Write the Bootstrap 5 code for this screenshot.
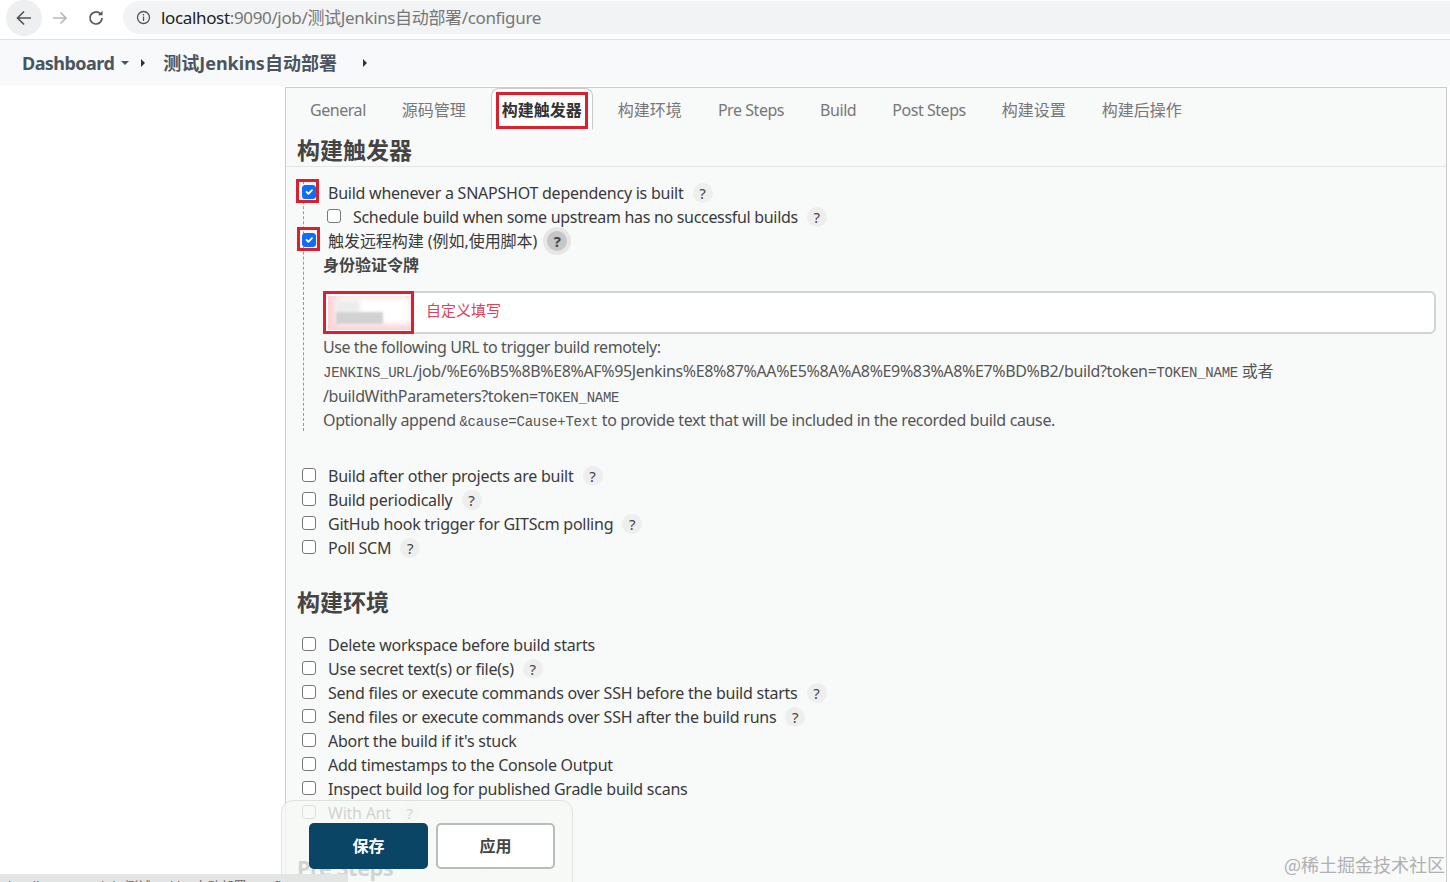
<!DOCTYPE html>
<html lang="zh-CN">
<head>
  <meta charset="UTF-8" />
  <meta name="viewport" content="width=device-width, initial-scale=1.0" />
  <title>测试Jenkins自动部署 Config</title>
  <link href="https://cdn.jsdelivr.net/npm/bootstrap@5.3.0/dist/css/bootstrap.min.css" rel="stylesheet" />
  <style>
    html, body { height: 882px; overflow: hidden; }
    body { font-family: "Noto Sans", "Noto Sans CJK SC", sans-serif; font-size: 16px; color: #333; background: #fff; position: relative; }

    .browser-bar { height: 40px; border-bottom: 1px solid #dfe1e3; padding: 0 0 4px 6px; }
    .nav-round { width: 36px; height: 36px; border-radius: 50%; flex: none; }
    .nav-round.hovered { background: #eeeff0; }
    .url-pill { height: 33px; margin-left: 9px; padding-left: 13px; background: #f1f3f4; border-radius: 17px 0 0 17px; color: #777; font-size: 17px; letter-spacing: -.35px; }
    .url-pill b { font-weight: 400; color: #222; }
    .url-pill svg { margin-right: 10px; }

    .crumb-bar { height: 46px; background: #f8f9fa; padding-left: 22px; font-weight: 700; font-size: 18px; color: #4a5560; }
    .crumb-tight { letter-spacing: -.55px; }
    .tri-down { border: 4px solid transparent; border-top: 4px solid #4a5560; border-bottom: 0; width: 0; height: 0; margin-left: 7px; }
    .tri-right { border: 4px solid transparent; border-left: 4px solid #333; border-right: 0; width: 0; height: 0; }
    .tri-first { margin-left: 12px; }
    .crumb-job { margin-left: 18px; }
    .tri-last { margin-left: 26px; }

    .main-panel { margin: 1px 3px 0 285px; height: 800px; background: #f8f9f9; border-left: 1px solid #ccc; border-right: 1px solid #ccc; border-top: 1px solid #ccc; overflow: hidden; }

    .tab-strip { height: 42px; padding-left: 6px; background: #f8f9f9; border-bottom: 0; }
    .tab-strip .nav-link { height: 42px; margin: 0 7px; padding: 1px 10px 0; color: #777; border: 1px solid transparent; background: none; font-size: 16px; display: flex; align-items: center; }
    .tab-strip .nav-link.latin-tab { letter-spacing: -.45px; }
    .tab-strip .nav-link.active { position: relative; background: #fff; color: #333; font-weight: 700; border-color: #ccc #ccc transparent; border-radius: 8px 8px 0 0; }
    .tab-redbox { position: absolute; left: 4px; top: 3px; width: 92px; height: 37px; border: 3px solid #d9202c; }

    .sect-title { margin: 0 11px; font-size: 23px; font-weight: 700; line-height: 36px; color: #444; }
    .sect-first { padding-top: 2px; }
    .sect-rule { border-bottom: 1px solid #e4e4e4; height: 37px; }
    .sect-gap { margin-top: 24px; }
    .sect-latin { font-size: 22px; letter-spacing: -.6px; }

    .opt-row { height: 24px; display: flex; align-items: center; padding-left: 16px; white-space: nowrap; color: #3a3a3a; letter-spacing: -.24px; position: relative; }
    .opt-row.cjk-row { letter-spacing: -.05px; }
    .opt-row .form-check-input { width: 14px; height: 14px; margin: -3px 12px 0 0; flex: none; border: 1px solid #777; border-radius: 3px; }
    .opt-row .form-check-input:checked { background-color: #0d6efd; border-color: #0d6efd; }
    .help-dot { width: 20px; height: 20px; margin-left: 9px; border-radius: 50%; background: #eeeeee; color: #444; font-size: 15px; letter-spacing: 0; display: flex; align-items: center; justify-content: center; flex: none; }
    .help-dot.hovered { margin-left: 10px; background: #c6c6c6; box-shadow: 0 0 0 4px #e6e6e6; font-weight: 700; }
    .red-frame { position: absolute; border: 3px solid #d9202c; pointer-events: none; }
    .frame-one { left: 10px; top: -2px; width: 23px; height: 24px; }
    .frame-two { left: 11px; top: -2px; width: 23px; height: 24px; }

    .trigger-block { margin: 14px 0 0 17px; border-left: 1px dashed #999; position: relative; height: 250px; }
    .trigger-block .opt-row { margin-left: -18px; }
    .trigger-block .opt-row.nested { padding-left: 41px; letter-spacing: -.31px; }

    .field-name { height: 24px; line-height: 24px; margin-left: 19px; font-weight: 700; color: #444; }
    .token-box { margin: 14px 10px 0 19px; height: 43px; border-radius: 6px; border: 2px solid #d0d3d3; background: #fff; padding: 0 0 4px 101px; color: #e0405a; font-size: 15px; position: relative; }
    .token-mask { position: absolute; left: 3px; top: 3px; width: 83px; height: 34px; background: #fff; box-shadow: inset 0 -5px 6px #fbd3d8, inset 8px 0 8px #fbd3d8; }
    .token-mask::before { content: ""; position: absolute; left: 8px; top: 4px; width: 24px; height: 13px; background: #ececec; filter: blur(2px); }
    .token-mask::after { content: ""; position: absolute; left: 8px; top: 16px; width: 47px; height: 12px; background: #d2d2d2; filter: blur(1px); }
    .token-frame { left: -2px; top: -2px; width: 91px; height: 43px; }
    .hint-line { height: 24.4px; line-height: 24.4px; margin-left: 19px; white-space: nowrap; color: #555; letter-spacing: -.36px; }
    .hint-line code { font-family: "Liberation Mono", monospace; color: #555; font-size: 14px; letter-spacing: -.25px; }
    .hint-line.first { margin-top: 1px; letter-spacing: -.42px; }

    .trigger-rest { margin-top: 33px; }
    .env-rows { margin-top: 13px; }

    .save-tray { position: absolute; left: 281px; top: 800px; width: 292px; height: 90px; background: rgba(246,249,245,.8); border: 1px solid #dfe3df; border-radius: 12px 12px 0 0; padding: 22px 17px 0 27px; }
    .save-tray .btn { width: 119px; height: 46px; font-weight: 700; font-size: 16px; border-radius: 5px; padding: 0; }
    .btn-jenkins { background: #0b4566; color: #fff; border: 0; }
    .btn-plain { background: #fff; color: #444; border: 2px solid #b8bcbc; }

    .status-peek { position: absolute; left: 0; top: 874px; width: 348px; height: 8px; background: #e3e4e4; overflow: hidden; font-size: 13px; line-height: 24px; color: #666; padding-left: 8px; white-space: nowrap; }
    .water-sign { position: absolute; right: 5px; top: 851px; font-size: 18px; color: #b0b0b0; white-space: nowrap; font-family: "Noto Sans CJK SC", "Noto Sans", sans-serif; }
  </style>
</head>
<body>
  <div class="browser-bar d-flex align-items-center">
    <div class="nav-round hovered d-flex align-items-center justify-content-center">
      <svg width="18" height="18" viewBox="0 0 18 18" fill="none" stroke="#555" stroke-width="1.7"><path d="M16 9H3M9 2.500 2.500 9 9 15.500"/></svg>
    </div>
    <div class="nav-round d-flex align-items-center justify-content-center">
      <svg width="18" height="18" viewBox="0 0 18 18" fill="none" stroke="#b4b7ba" stroke-width="1.6"><path d="M2 9h13M9.500 3.500 15 9l-5.500 5.500"/></svg>
    </div>
    <div class="nav-round d-flex align-items-center justify-content-center">
      <svg width="18" height="18" viewBox="0 0 18 18" fill="none" stroke="#555" stroke-width="1.7"><path d="M15 9a6 6 0 1 1-1.800-4.300"/><path d="M15.500 1.800v4.500H11" fill="#555" stroke="none"/></svg>
    </div>
    <div class="url-pill flex-grow-1 d-flex align-items-center">
      <svg width="15" height="15" viewBox="0 0 15 15" fill="none" stroke="#555" stroke-width="1.3"><circle cx="7.500" cy="7.500" r="6"/><path d="M7.500 6.500v4.500M7.500 4v1.500"/></svg>
      <span><b>localhost</b>:9090/job/测试Jenkins自动部署/configure</span>
    </div>
  </div>

  <div class="crumb-bar d-flex align-items-center">
    <span class="crumb-tight">Dashboard</span>
    <span class="tri-down"></span>
    <span class="tri-right tri-first"></span>
    <span class="crumb-job">测试Jenkins自动部署</span>
    <span class="tri-right tri-last"></span>
  </div>

  <div class="main-panel">
    <ul class="nav tab-strip">
      <li class="nav-item"><a class="nav-link latin-tab" href="#">General</a></li>
      <li class="nav-item"><a class="nav-link" href="#">源码管理</a></li>
      <li class="nav-item"><a class="nav-link active" href="#">构建触发器<span class="tab-redbox"></span></a></li>
      <li class="nav-item"><a class="nav-link" href="#">构建环境</a></li>
      <li class="nav-item"><a class="nav-link latin-tab" href="#">Pre Steps</a></li>
      <li class="nav-item"><a class="nav-link latin-tab" href="#">Build</a></li>
      <li class="nav-item"><a class="nav-link latin-tab" href="#">Post Steps</a></li>
      <li class="nav-item"><a class="nav-link" href="#">构建设置</a></li>
      <li class="nav-item"><a class="nav-link" href="#">构建后操作</a></li>
    </ul>

    <div class="sect-rule"><h2 class="sect-title sect-first">构建触发器</h2></div>

    <div class="trigger-block">
      <div class="opt-row">
        <input class="form-check-input" type="checkbox" checked />
        <span>Build whenever a SNAPSHOT dependency is built</span><span class="help-dot">?</span>
        <span class="red-frame frame-one"></span>
      </div>
      <div class="opt-row nested">
        <input class="form-check-input" type="checkbox" />
        <span>Schedule build when some upstream has no successful builds</span><span class="help-dot">?</span>
      </div>
      <div class="opt-row cjk-row">
        <input class="form-check-input" type="checkbox" checked />
        <span>触发远程构建 (例如,使用脚本)</span><span class="help-dot hovered">?</span>
        <span class="red-frame frame-two"></span>
      </div>
      <div class="field-name">身份验证令牌</div>
      <div class="token-box d-flex align-items-center">
        <span class="token-mask"></span>
        <span class="red-frame token-frame"></span>
        自定义填写
      </div>
      <div class="hint-line first">Use the following URL to trigger build remotely:</div>
      <div class="hint-line"><code>JENKINS_URL</code>/job/%E6%B5%8B%E8%AF%95Jenkins%E8%87%AA%E5%8A%A8%E9%83%A8%E7%BD%B2/build?token=<code>TOKEN_NAME</code> 或者</div>
      <div class="hint-line">/buildWithParameters?token=<code>TOKEN_NAME</code></div>
      <div class="hint-line">Optionally append <code>&amp;cause=Cause+Text</code> to provide text that will be included in the recorded build cause.</div>
    </div>

    <div class="trigger-rest">
      <div class="opt-row"><input class="form-check-input" type="checkbox" /><span>Build after other projects are built</span><span class="help-dot">?</span></div>
      <div class="opt-row"><input class="form-check-input" type="checkbox" /><span>Build periodically</span><span class="help-dot">?</span></div>
      <div class="opt-row"><input class="form-check-input" type="checkbox" /><span>GitHub hook trigger for GITScm polling</span><span class="help-dot">?</span></div>
      <div class="opt-row"><input class="form-check-input" type="checkbox" /><span>Poll SCM</span><span class="help-dot">?</span></div>
    </div>

    <h2 class="sect-title sect-gap">构建环境</h2>

    <div class="env-rows">
      <div class="opt-row"><input class="form-check-input" type="checkbox" /><span>Delete workspace before build starts</span></div>
      <div class="opt-row"><input class="form-check-input" type="checkbox" /><span>Use secret text(s) or file(s)</span><span class="help-dot">?</span></div>
      <div class="opt-row"><input class="form-check-input" type="checkbox" /><span>Send files or execute commands over SSH before the build starts</span><span class="help-dot">?</span></div>
      <div class="opt-row"><input class="form-check-input" type="checkbox" /><span>Send files or execute commands over SSH after the build runs</span><span class="help-dot">?</span></div>
      <div class="opt-row"><input class="form-check-input" type="checkbox" /><span>Abort the build if it's stuck</span></div>
      <div class="opt-row"><input class="form-check-input" type="checkbox" /><span>Add timestamps to the Console Output</span></div>
      <div class="opt-row"><input class="form-check-input" type="checkbox" /><span>Inspect build log for published Gradle build scans</span></div>
      <div class="opt-row"><input class="form-check-input" type="checkbox" /><span>With Ant</span><span class="help-dot">?</span></div>
    </div>

    <h2 class="sect-title sect-gap sect-latin">Pre Steps</h2>
  </div>

  <div class="save-tray d-flex gap-2 align-items-start">
    <button class="btn btn-jenkins" type="button">保存</button>
    <button class="btn btn-plain" type="button">应用</button>
  </div>

  <div class="status-peek">localhost:9090/job/测试Jenkins自动部署/configure#</div>
  <div class="water-sign">@稀土掘金技术社区</div>

  <script src="https://cdn.jsdelivr.net/npm/bootstrap@5.3.0/dist/js/bootstrap.bundle.min.js"></script>
</body>
</html>
